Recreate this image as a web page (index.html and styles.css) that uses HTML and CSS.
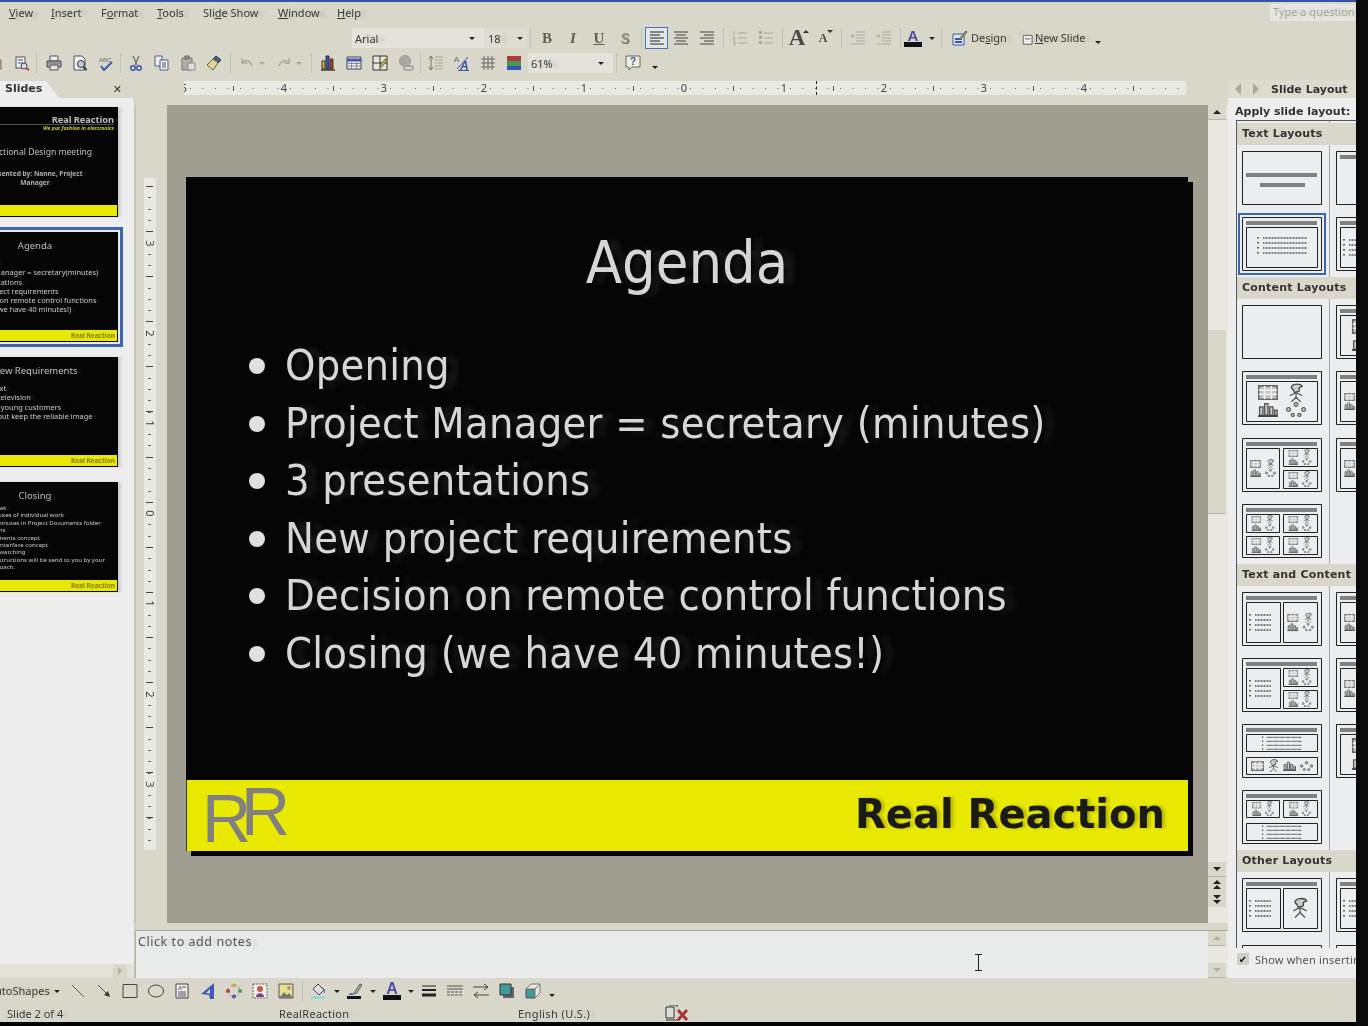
FILE: index.html
```html
<!DOCTYPE html>
<html lang="en">

<head>
    <meta charset="UTF-8">
    <meta name="viewport" content="width=device-width, initial-scale=1.0">
    <title>RealReaction - PowerPoint</title>
    <link rel="stylesheet" href="styles.css">
</head>

<body>
    <svg class="defs" width="0" height="0">
        <defs>
            <!-- toolbar icons -->
            <symbol id="i-open" viewBox="0 0 16 16"><path d="M1 3h5l1 2h6v9H1z" fill="#e3cf86" stroke="#666"/></symbol>
            <symbol id="i-search" viewBox="0 0 16 16"><rect x="2" y="2" width="9" height="11" fill="#efefef" stroke="#555"/><path d="M4 5h5M4 8h5" stroke="#39538f"/><circle cx="10" cy="11" r="3" fill="#cde" stroke="#444"/><path d="M12 13l3 2" stroke="#b33" stroke-width="2"/></symbol>
            <symbol id="i-print" viewBox="0 0 16 16"><path d="M4 1h8v5H4z" fill="#eee" stroke="#555"/><path d="M1 6h14v6H1z" fill="#aaa" stroke="#444"/><path d="M4 10h8v5H4z" fill="#ddd" stroke="#555"/><path d="M2 8h12" stroke="#777"/></symbol>
            <symbol id="i-preview" viewBox="0 0 16 16"><path d="M2 1h8l3 3v11H2z" fill="#eee" stroke="#555"/><circle cx="9" cy="9" r="3.500" fill="#bcd" stroke="#333"/><path d="M11.500 12l3 3" stroke="#333" stroke-width="2"/></symbol>
            <symbol id="i-spell" viewBox="0 0 16 16"><text x="1" y="6.500" font-size="6" font-family="Liberation Sans" fill="#666">ABC</text><path d="M3 11l3 4 8-8" fill="none" stroke="#3a55a8" stroke-width="2"/></symbol>
            <symbol id="i-cut" viewBox="0 0 16 16"><path d="M5 1l4 9M11 1L7 10" stroke="#777" stroke-width="1.400"/><circle cx="5" cy="13" r="2.300" fill="none" stroke="#3a55a8" stroke-width="1.400"/><circle cx="11" cy="13" r="2.300" fill="none" stroke="#3a55a8" stroke-width="1.400"/></symbol>
            <symbol id="i-copy" viewBox="0 0 16 16"><path d="M1 1h7v10H1z" fill="#eee" stroke="#4a5f95"/><path d="M6 5h8v10H6z" fill="#f2f2f2" stroke="#4a5f95"/><path d="M8 8h4M8 10h4M8 12h4" stroke="#555"/></symbol>
            <symbol id="i-paste" viewBox="0 0 16 16"><path d="M2 3h10v12H2z" fill="#b0ae9f" stroke="#777"/><path d="M5 1h4v3H5z" fill="#999" stroke="#666"/><path d="M8 8h7v7H8z" fill="#ddd" stroke="#888"/></symbol>
            <symbol id="i-brush" viewBox="0 0 16 16"><path d="M10 1l5 4-3 3-5-4z" fill="#4a5f95" stroke="#333"/><path d="M7 4l5 4-5 7-6-5z" fill="#e6d488" stroke="#666"/></symbol>
            <symbol id="i-undo" viewBox="0 0 16 16"><path d="M3 3v5h5M3 8c3-4 8-3 10 3" fill="none" stroke="#aaa9a0" stroke-width="1.500"/></symbol>
            <symbol id="i-redo" viewBox="0 0 16 16"><path d="M13 3v5H8M13 8c-3-4-8-3-10 3" fill="none" stroke="#aaa9a0" stroke-width="1.500"/></symbol>
            <symbol id="i-chart" viewBox="0 0 16 16"><path d="M2 6h3v8H2z" fill="#d8b83a" stroke="#333"/><path d="M6 1h3v13H6z" fill="#3a55a8" stroke="#333"/><path d="M10 4h3v10h-3z" fill="#b03a3a" stroke="#333"/><path d="M1 15h14" stroke="#333" stroke-width="1.400"/></symbol>
            <symbol id="i-table" viewBox="0 0 16 16"><path d="M1 2h14v12H1z" fill="#eee" stroke="#445"/><path d="M1 5h14" stroke="#3a55a8" stroke-width="3"/><path d="M1 8.500h14M1 11h14M5.500 5v9M10.500 5v9" stroke="#889"/></symbol>
            <symbol id="i-border" viewBox="0 0 16 16"><path d="M1 1h14v14H1zM8 1v14M1 8h14" fill="#e6e6de" stroke="#333"/><path d="M8 11l5-7 2 1-5 7z" fill="#d8b83a" stroke="#665"/></symbol>
            <symbol id="i-globe" viewBox="0 0 16 16"><circle cx="7" cy="6" r="5.500" fill="#aaa9a0" stroke="#999"/><path d="M6 11h7a2 2 0 010 4H8a2 2 0 010-4" fill="none" stroke="#999" stroke-width="1.400"/></symbol>
            <symbol id="i-spacing" viewBox="0 0 16 16"><path d="M7 2h8M7 5h8M7 8h8M7 11h8M7 14h8" stroke="#aaa9a0"/><path d="M3 2v12M1 4l2-3 2 3M1 12l2 3 2-3" fill="none" stroke="#777"/></symbol>
            <symbol id="i-grow" viewBox="0 0 16 16"><text x="0" y="7" font-size="8" font-family="Liberation Sans" fill="#666">A</text><path d="M3 14L14 2" stroke="#3a55a8"/><text x="6" y="15" font-size="12" font-weight="bold" font-style="italic" font-family="Liberation Sans" fill="#3a55a8">A</text><path d="M4 15.500h11" stroke="#3a55a8"/></symbol>
            <symbol id="i-grid" viewBox="0 0 16 16"><path d="M1 4h14M1 8h14M1 12h14M4 1v14M8 1v14M12 1v14" stroke="#666"/></symbol>
            <symbol id="i-color" viewBox="0 0 16 16"><path d="M1 1h14v5H1z" fill="#b03a3a"/><path d="M1 6h14v5H1z" fill="#3f9a55"/><path d="M1 11h14v4H1z" fill="#3a4fb0"/></symbol>
            <symbol id="i-help" viewBox="0 0 16 16"><path d="M1 1h14v11H7l-3 3v-3H1z" fill="#f0efdc" stroke="#666"/><text x="5" y="10" font-size="10" font-weight="bold" font-family="Liberation Sans" fill="#3a55a8">?</text></symbol>
            <symbol id="i-left" viewBox="0 0 16 16"><path d="M1 2h14M1 5h10M1 8h14M1 11h10M1 14h14" stroke="#222"/></symbol>
            <symbol id="i-center" viewBox="0 0 16 16"><path d="M1 2h14M3 5h10M1 8h14M3 11h10M1 14h14" stroke="#444"/></symbol>
            <symbol id="i-right" viewBox="0 0 16 16"><path d="M1 2h14M5 5h10M1 8h14M5 11h10M1 14h14" stroke="#444"/></symbol>
            <symbol id="i-number" viewBox="0 0 16 16"><path d="M6 3h9M6 8h9M6 13h9" stroke="#aaa9a0"/><path d="M2 1v4M1 7h2l-2 3h2M1 12h2v3H1" fill="none" stroke="#aaa9a0"/></symbol>
            <symbol id="i-bullet" viewBox="0 0 16 16"><path d="M6 3h9M6 8h9M6 13h9" stroke="#aaa9a0"/><path d="M1 1h3v3H1zM1 6h3v3H1zM1 11h3v3H1z" fill="#aaa9a0"/></symbol>
            <symbol id="i-outdent" viewBox="0 0 16 16"><path d="M6 2h9M6 5h9M6 8h9M6 11h9M1 14h14" stroke="#aaa9a0"/><path d="M5 6H1m2-2L1 6l2 2" fill="none" stroke="#9aa"/></symbol>
            <symbol id="i-indent" viewBox="0 0 16 16"><path d="M6 2h9M6 5h9M6 8h9M6 11h9M1 14h14" stroke="#aaa9a0"/><path d="M0 6h4M2 4l2 2-2 2" fill="none" stroke="#9aa"/></symbol>
            <symbol id="i-design" viewBox="0 0 16 16"><path d="M1 4h11v11H1z" fill="#dde6f5" stroke="#3a55a8"/><path d="M3 9h7M3 12h7" stroke="#3a55a8" stroke-width="2"/><path d="M7 9l7-8 1 1-7 8z" fill="#d8b83a" stroke="#555"/></symbol>
            <symbol id="i-new" viewBox="0 0 18 16"><path d="M7 5h10v10H7z" fill="#efefe8" stroke="#555"/><path d="M9 9h6" stroke="#555"/><path d="M3 1l1 3M0 5h3M7 0L5 3M1 1l2 3" stroke="#c9c9c0"/></symbol>
            <symbol id="i-line" viewBox="0 0 16 16"><path d="M2 2l12 12" stroke="#555"/></symbol>
            <symbol id="i-arrow" viewBox="0 0 16 16"><path d="M2 2l10 10" stroke="#555"/><path d="M14 14l-6-2 4-4z" fill="#333"/></symbol>
            <symbol id="i-rect" viewBox="0 0 16 16"><path d="M1 1.500h14v13H1z" fill="none" stroke="#444"/></symbol>
            <symbol id="i-oval" viewBox="0 0 16 16"><ellipse cx="8" cy="8" rx="7.500" ry="6" fill="none" stroke="#444"/></symbol>
            <symbol id="i-textbox" viewBox="0 0 16 16"><path d="M2 1h12v14H2z" fill="#eee" stroke="#444"/><text x="4" y="7" font-size="6" font-family="Liberation Sans" fill="#333">A</text><path d="M8 4h4M4 9h8M4 11h8M4 13h8" stroke="#555"/></symbol>
            <symbol id="i-wordart" viewBox="0 0 16 16"><path d="M14 0L1 11l8 1 1 4h4zM10 6l-4 4 4 .5z" fill="#3f5bb5" fill-rule="evenodd"/></symbol>
            <symbol id="i-diagram" viewBox="0 0 16 16"><circle cx="8" cy="2.500" r="2" fill="#d8b83a"/><circle cx="14" cy="8" r="2" fill="#3f9a55"/><circle cx="8" cy="13.500" r="2" fill="#3a4fb0"/><circle cx="2" cy="8" r="2" fill="#b03a3a"/><circle cx="8" cy="8" r="6" fill="none" stroke="#888" stroke-dasharray="2 2"/></symbol>
            <symbol id="i-clip" viewBox="0 0 16 16"><path d="M1 1h14v14H1z" fill="#eee" stroke="#666" stroke-dasharray="2 1"/><circle cx="8" cy="6" r="3" fill="#c45a4a"/><path d="M4 14c0-5 8-5 8 0z" fill="#7a3f7a"/></symbol>
            <symbol id="i-pic" viewBox="0 0 16 16"><path d="M1 1h14v14H1z" fill="#e8e08a" stroke="#555"/><path d="M1 15l5-6 3 3 2-2 4 5z" fill="#777"/><circle cx="11" cy="5" r="2" fill="#999"/></symbol>
            <symbol id="i-fill" viewBox="0 0 16 16"><path d="M7 1l6 6-5 5-6-6z" fill="#ddd" stroke="#445"/><path d="M11 5c3 1 3 4 2 5" fill="none" stroke="#3a55a8"/><path d="M0 13h14v3H0z" fill="#9fd3d3"/></symbol>
            <symbol id="i-pen" viewBox="0 0 16 16"><path d="M7 10l6-9 2 1-6 9z" fill="#d8b83a" stroke="#3a55a8"/><path d="M3 10c2 1 4 0 4 0l-1 2H2z" fill="#3a55a8"/><path d="M0 13h14v3H0z" fill="#111"/></symbol>
            <symbol id="i-lines" viewBox="0 0 16 16"><path d="M1 3h14" stroke="#222"/><path d="M1 7h14" stroke="#222" stroke-width="2"/><path d="M1 12h14" stroke="#222" stroke-width="3"/></symbol>
            <symbol id="i-dash" viewBox="0 0 16 16"><path d="M0 3h16M0 6h16" stroke="#555"/><path d="M0 9h16M0 12h16" stroke="#555" stroke-dasharray="3 1"/></symbol>
            <symbol id="i-arrows" viewBox="0 0 16 16"><path d="M0 4h15M11 1l4 3-4 3" fill="none" stroke="#444"/><path d="M1 12h15M5 9l-4 3 4 3" fill="none" stroke="#444"/></symbol>
            <symbol id="i-shadow" viewBox="0 0 16 16"><path d="M4 4h11v11H4z" fill="#666"/><path d="M1 1h11v11H1z" fill="#3f9a9a" stroke="#333"/></symbol>
            <symbol id="i-3d" viewBox="0 0 16 16"><path d="M1 6h9v9H1z" fill="#3f9a9a" stroke="#555"/><path d="M1 6l5-5h9l-5 5zM10 6l5-5v9l-5 5z" fill="#e6e6de" stroke="#777"/></symbol>
            <symbol id="i-book" viewBox="0 0 24 16"><path d="M1 2h8v11H1zM4 0h8v2M1 15h12" fill="#ddd" stroke="#333"/><path d="M13 5l9 10M22 5l-9 10" stroke="#a33" stroke-width="3"/></symbol>

            <!-- pieces of the layout thumbnails -->
            <symbol id="p-table" viewBox="0 0 12 9"><path d="M.500.500h11v8H.500z" fill="#c4c4c4" stroke="#666"/><path d="M.500 3h11M.500 5.500h11M4 .500v8M8 .500v8" stroke="#eee"/></symbol>
            <symbol id="p-person" viewBox="0 0 12 12"><path d="M3 3c0-3 6-3 7-1L8 3v2l-3 1-1-2z" fill="#ccc" stroke="#444" stroke-width=".8"/><path d="M6 6v3M2 8l4-2 4 2M6 9l-3 3M6 9l3 3" fill="none" stroke="#555" stroke-width=".8"/></symbol>
            <symbol id="p-chart" viewBox="0 0 12 9"><path d="M1 3h2v5H1zM4 1h2v7H4zM7 3h2v5H7zM10 5h1.500v3H10z" fill="#ccc" stroke="#555" stroke-width=".8"/><path d="M0 8.500h12" stroke="#444"/></symbol>
            <symbol id="p-cycle" viewBox="0 0 12 9"><circle cx="6" cy="1.500" r="1.200" fill="#bbb" stroke="#444" stroke-width=".6"/><circle cx="10.500" cy="4.500" r="1.200" fill="#bbb" stroke="#444" stroke-width=".6"/><circle cx="8" cy="7.800" r="1" fill="#bbb" stroke="#444" stroke-width=".6"/><circle cx="4" cy="7.800" r="1" fill="#bbb" stroke="#444" stroke-width=".6"/><circle cx="1.500" cy="4.500" r="1.200" fill="#bbb" stroke="#444" stroke-width=".6"/></symbol>
            <symbol id="p-tile" viewBox="0 0 32 19">
                <use href="#p-table" x="3" y="1" width="11" height="8"/>
                <use href="#p-person" x="18" y="0" width="11" height="10"/>
                <use href="#p-chart" x="3" y="10" width="11" height="8"/>
                <use href="#p-cycle" x="18" y="10" width="11" height="8"/>
            </symbol>
            <symbol id="p-lines" viewBox="0 0 56 20"><path d="M5 2v1.500M5 7v1.500M5 12v1.500M5 17v1.500" stroke="#333" stroke-width="1.500"/><path d="M10 3h44M10 8h44M10 13h44M10 18h44" stroke="#555" stroke-width="1.500" stroke-dasharray="1 .5"/></symbol>
            <symbol id="p-short" viewBox="0 0 30 20"><path d="M3 2v1.500M3 7v1.500M3 12v1.500M3 17v1.500" stroke="#333" stroke-width="1.500"/><path d="M8 3h16M8 8h16M8 13h16M8 18h16" stroke="#555" stroke-width="1.500" stroke-dasharray="1 .5"/></symbol>
            <symbol id="p-base" viewBox="0 0 80 54"><path d="M.500.500h79v53H.500z" fill="#ecedee" stroke="#222"/><path d="M4 4h71v4H4z" fill="#808080"/></symbol>
            <symbol id="p-bare" viewBox="0 0 80 54"><path d="M.500.500h79v53H.500z" fill="#ecedee" stroke="#222"/></symbol>

            <!-- slide layouts -->
            <symbol id="l-title" viewBox="0 0 80 54"><use href="#p-bare"/><path d="M4 22h71v4H4z" fill="#808080"/><path d="M18 32h45v4H18z" fill="#808080"/></symbol>
            <symbol id="l-only" viewBox="0 0 80 54"><use href="#p-base"/></symbol>
            <symbol id="l-text" viewBox="0 0 80 54"><use href="#p-base"/><path d="M4.500 10.500h71v40h-71z" fill="none" stroke="#222"/><use href="#p-lines" x="11" y="18" width="56" height="20"/></symbol>
            <symbol id="l-2text" viewBox="0 0 80 54"><use href="#p-base"/><path d="M4.500 10.500h33v40h-33zM41.500 10.500h34v40h-34z" fill="none" stroke="#222"/><use href="#p-short" x="5" y="20" width="30" height="20"/></symbol>
            <symbol id="l-blank" viewBox="0 0 80 54"><use href="#p-bare"/></symbol>
            <symbol id="l-one" viewBox="0 0 80 54"><use href="#p-base"/><path d="M4.500 10.500h71v40h-71z" fill="none" stroke="#222"/><use href="#p-tile" x="10" y="12" width="60" height="36"/></symbol>
            <symbol id="l-mix" viewBox="0 0 80 54"><use href="#p-base"/><path d="M4.500 10.500h33v40h-33zM41.500 10.500h34v18h-34zM41.500 32.500h34v18h-34z" fill="none" stroke="#222"/><use href="#p-tile" x="5" y="14" width="32" height="33"/><use href="#p-tile" x="42" y="11" width="32" height="17"/><use href="#p-tile" x="42" y="33" width="32" height="17"/></symbol>
            <symbol id="l-four" viewBox="0 0 80 54"><use href="#p-base"/><path d="M4.500 10.500h33v18h-33zM41.500 10.500h34v18h-34zM4.500 32.500h33v18h-33zM41.500 32.500h34v18h-34z" fill="none" stroke="#222"/><use href="#p-tile" x="5" y="11" width="32" height="17"/><use href="#p-tile" x="42" y="11" width="32" height="17"/><use href="#p-tile" x="5" y="33" width="32" height="17"/><use href="#p-tile" x="42" y="33" width="32" height="17"/></symbol>
            <symbol id="l-tc" viewBox="0 0 80 54"><use href="#p-base"/><path d="M4.500 10.500h34v40h-34zM41.500 10.500h34v40h-34z" fill="none" stroke="#222"/><use href="#p-short" x="5" y="20" width="30" height="20"/><use href="#p-tile" x="42" y="12" width="33" height="37"/></symbol>
            <symbol id="l-tcc" viewBox="0 0 80 54"><use href="#p-base"/><path d="M4.500 10.500h34v40h-34zM41.500 10.500h34v18h-34zM41.500 32.500h34v18h-34z" fill="none" stroke="#222"/><use href="#p-short" x="5" y="20" width="30" height="20"/><use href="#p-tile" x="42" y="11" width="32" height="17"/><use href="#p-tile" x="42" y="33" width="32" height="17"/></symbol>
            <symbol id="l-over" viewBox="0 0 80 54"><use href="#p-base"/><path d="M4.500 10.500h71v17h-71zM4.500 33.500h71v17h-71z" fill="none" stroke="#222"/><use href="#p-lines" x="11" y="11" width="56" height="16"/><use href="#p-table" x="9" y="37" width="13" height="10"/><use href="#p-person" x="25" y="35" width="13" height="13"/><use href="#p-chart" x="41" y="37" width="13" height="10"/><use href="#p-cycle" x="58" y="37" width="13" height="10"/></symbol>
            <symbol id="l-under" viewBox="0 0 80 54"><use href="#p-base"/><path d="M4.500 10.500h33v17h-33zM41.500 10.500h34v17h-34zM4.500 33.500h71v17h-71z" fill="none" stroke="#222"/><use href="#p-tile" x="5" y="11" width="32" height="16"/><use href="#p-tile" x="42" y="11" width="32" height="16"/><use href="#p-lines" x="11" y="34" width="56" height="16"/></symbol>
            <symbol id="l-person" viewBox="0 0 80 54"><use href="#p-base"/><path d="M4.500 10.500h34v40h-34zM41.500 10.500h34v40h-34z" fill="#ecedee" stroke="#222"/><use href="#p-short" x="5" y="20" width="30" height="20"/><use href="#p-person" x="48" y="19" width="20" height="21"/></symbol>
        </defs>
    </svg>

    <div class="app">
        <div class="title-line"></div>

        <div class="menu">
            <span class="menu-item m-view"><u>V</u>iew</span>
            <span class="menu-item m-insert"><u>I</u>nsert</span>
            <span class="menu-item m-format">F<u>o</u>rmat</span>
            <span class="menu-item m-tools"><u>T</u>ools</span>
            <span class="menu-item m-show">Sli<u>d</u>e Show</span>
            <span class="menu-item m-window"><u>W</u>indow</span>
            <span class="menu-item"><u>H</u>elp</span>
            <span class="question">Type a question</span>
        </div>

        <div class="toolbar format-bar">
            <span class="combo font-combo">Arial<i class="caret"></i></span>
            <span class="combo size-combo">18<i class="caret"></i></span>
            <span class="sep"></span>
            <span class="b letter"><b>B</b></span>
            <span class="b letter"><em>I</em></span>
            <span class="b letter"><u>U</u></span>
            <span class="b letter shadowed">S</span>
            <span class="sep"></span>
            <span class="b active"><svg><use href="#i-left"/></svg></span>
            <span class="b"><svg><use href="#i-center"/></svg></span>
            <span class="b"><svg><use href="#i-right"/></svg></span>
            <span class="sep"></span>
            <span class="b"><svg><use href="#i-number"/></svg></span>
            <span class="b"><svg><use href="#i-bullet"/></svg></span>
            <span class="sep"></span>
            <span class="b grow-a">A<i class="up"></i></span>
            <span class="b shrink-a">A<i class="up"></i></span>
            <span class="sep"></span>
            <span class="b"><svg><use href="#i-outdent"/></svg></span>
            <span class="b"><svg><use href="#i-indent"/></svg></span>
            <span class="sep"></span>
            <span class="b color-a format-color">A<i class="swatch"></i></span>
            <i class="caret solo"></i>
            <span class="sep design-sep"></span>
            <span class="b small"><svg><use href="#i-design"/></svg></span>
            <span class="tool-label design-label">De<u>s</u>ign</span>
            <span class="b small new-icon"><svg><use href="#i-new"/></svg></span>
            <span class="tool-label"><u>N</u>ew Slide</span>
            <i class="caret chevron format-chevron"></i>
        </div>

        <div class="toolbar standard-bar">
            <span class="b"><svg><use href="#i-open"/></svg></span>
            <span class="b"><svg><use href="#i-search"/></svg></span>
            <span class="sep wide"></span>
            <span class="b"><svg><use href="#i-print"/></svg></span>
            <span class="b"><svg><use href="#i-preview"/></svg></span>
            <span class="b"><svg><use href="#i-spell"/></svg></span>
            <span class="sep tight"></span>
            <span class="b"><svg><use href="#i-cut"/></svg></span>
            <span class="b"><svg><use href="#i-copy"/></svg></span>
            <span class="b"><svg><use href="#i-paste"/></svg></span>
            <span class="b"><svg><use href="#i-brush"/></svg></span>
            <span class="sep"></span>
            <span class="b"><svg><use href="#i-undo"/></svg></span>
            <i class="caret faded"></i>
            <span class="b"><svg><use href="#i-redo"/></svg></span>
            <i class="caret faded"></i>
            <span class="sep"></span>
            <span class="b"><svg><use href="#i-chart"/></svg></span>
            <span class="b"><svg><use href="#i-table"/></svg></span>
            <span class="b"><svg><use href="#i-border"/></svg></span>
            <span class="b"><svg><use href="#i-globe"/></svg></span>
            <span class="sep tight"></span>
            <span class="b"><svg><use href="#i-spacing"/></svg></span>
            <span class="b"><svg><use href="#i-grow"/></svg></span>
            <span class="b"><svg><use href="#i-grid"/></svg></span>
            <span class="b"><svg><use href="#i-color"/></svg></span>
            <span class="combo zoom-combo">61%<i class="caret"></i></span>
            <span class="sep"></span>
            <span class="b"><svg><use href="#i-help"/></svg></span>
            <i class="caret chevron"></i>
        </div>

        <div class="main">
            <aside class="slides-pane">
                <div class="pane-tabs">
                    <span class="tab">Slides</span>
                    <span class="close">✕</span>
                </div>
                <div class="thumbs">
                    <div class="thumb">
                        <div class="thumb-brand">Real Reaction</div>
                        <div class="thumb-tag">We put fashion in electronics</div>
                        <div class="thumb-cover">Functional Design meeting</div>
                        <div class="thumb-by">Presented by: Nanne, Project<br>Manager</div>
                        <div class="thumb-band"></div>
                    </div>
                    <div class="thumb selected">
                        <div class="thumb-title">Agenda</div>
                        <ul class="thumb-list">
                            <li>Opening</li>
                            <li>Project Manager = secretary(minutes)</li>
                            <li>3 presentations</li>
                            <li>New project requirements</li>
                            <li>Decision on remote control functions</li>
                            <li>Closing (we have 40 minutes!)</li>
                        </ul>
                        <div class="thumb-band">Real Reaction</div>
                    </div>
                    <div class="thumb">
                        <div class="thumb-title">New Requirements</div>
                        <ul class="thumb-list">
                            <li>No teletext</li>
                            <li>Only for television</li>
                            <li>Focus on young customers</li>
                            <li>Modern but keep the reliable image</li>
                        </ul>
                        <div class="thumb-band">Real Reaction</div>
                    </div>
                    <div class="thumb">
                        <div class="thumb-title">Closing</div>
                        <ul class="thumb-list dense">
                            <li>Coffee break</li>
                            <li>Thirty minutes of individual work</li>
                            <li>Put your minutes in Project Documents folder</li>
                            <li>Next actions</li>
                            <li>ID: components concept</li>
                            <li>UID: user interface concept</li>
                            <li>ME: trend watching</li>
                            <li>Specific instructions will be send to you by your</li>
                            <li>personal coach.</li>
                        </ul>
                        <div class="thumb-band">Real Reaction</div>
                    </div>
                </div>
                <div class="hscroll"><span class="arrow-right"></span></div>
            </aside>

            <section class="center">
                <div class="h-ruler-row">
                    <div class="h-ruler">
                        <div class="h-cell">5</div>
                        <div class="h-cell">4</div>
                        <div class="h-cell">3</div>
                        <div class="h-cell">2</div>
                        <div class="h-cell">1</div>
                        <div class="h-cell">0</div>
                        <div class="h-cell">1</div>
                        <div class="h-cell">2</div>
                        <div class="h-cell">3</div>
                        <div class="h-cell">4</div>
                        <div class="h-cell blank"></div>
                        <span class="h-marker"></span>
                    </div>
                </div>

                <div class="work">
                    <div class="v-ruler-col">
                        <div class="v-ruler">
                            <div class="v-cell"><span>3</span></div>
                            <div class="v-cell"><span>2</span></div>
                            <div class="v-cell"><span>1</span></div>
                            <div class="v-cell"><span>0</span></div>
                            <div class="v-cell"><span>1</span></div>
                            <div class="v-cell"><span>2</span></div>
                            <div class="v-cell"><span>3</span></div>
                        </div>
                    </div>
                    <div class="canvas">
                        <div class="slide">
                            <h1 class="slide-title">Agenda</h1>
                            <ul class="slide-list">
                                <li>Opening</li>
                                <li>Project Manager = secretary (minutes)</li>
                                <li>3 presentations</li>
                                <li>New project requirements</li>
                                <li>Decision on remote control functions</li>
                                <li>Closing (we have 40 minutes!)</li>
                            </ul>
                            <div class="slide-band">
                                <div class="logo"><span class="logo-a">R</span><span class="logo-b">R</span></div>
                                <div class="brand">Real Reaction</div>
                            </div>
                        </div>
                    </div>
                    <div class="vscroll">
                        <span class="sb-btn"><i class="tri-up"></i></span>
                        <div class="sb-track"><div class="sb-thumb"></div></div>
                        <span class="sb-btn"><i class="tri-down"></i></span>
                        <span class="sb-page"><i class="tri-up"></i><i class="tri-up"></i></span>
                        <span class="sb-page"><i class="tri-down"></i><i class="tri-down"></i></span>
                    </div>
                </div>

                <div class="notes">
                    <div class="notes-text">Click to add notes</div>
                    <div class="notes-scroll">
                        <span class="sb-btn dim"><i class="tri-up"></i></span>
                        <span class="sb-btn dim"><i class="tri-down"></i></span>
                    </div>
                    <span class="ibeam"></span>
                </div>
            </section>

            <aside class="layout-pane">
                <div class="task-head">
                    <span class="nav-arrow left"></span>
                    <span class="nav-arrow right"></span>
                    <b>Slide Layout</b>
                </div>
                <div class="apply">Apply slide layout:</div>
                <div class="layouts">
                    <div class="lay-head">Text Layouts</div>
                    <div class="lay-grid">
                        <svg class="lay"><use href="#l-title"/></svg>
                        <svg class="lay"><use href="#l-only"/></svg>
                        <svg class="lay selected"><use href="#l-text"/></svg>
                        <svg class="lay"><use href="#l-2text"/></svg>
                    </div>
                    <div class="lay-head">Content Layouts</div>
                    <div class="lay-grid">
                        <svg class="lay"><use href="#l-blank"/></svg>
                        <svg class="lay"><use href="#l-one"/></svg>
                        <svg class="lay"><use href="#l-one"/></svg>
                        <svg class="lay"><use href="#l-mix"/></svg>
                        <svg class="lay"><use href="#l-mix"/></svg>
                        <svg class="lay"><use href="#l-mix"/></svg>
                        <svg class="lay"><use href="#l-four"/></svg>
                    </div>
                    <div class="lay-head">Text and Content Layouts</div>
                    <div class="lay-grid">
                        <svg class="lay"><use href="#l-tc"/></svg>
                        <svg class="lay"><use href="#l-mix"/></svg>
                        <svg class="lay"><use href="#l-tcc"/></svg>
                        <svg class="lay"><use href="#l-mix"/></svg>
                        <svg class="lay"><use href="#l-over"/></svg>
                        <svg class="lay"><use href="#l-one"/></svg>
                        <svg class="lay"><use href="#l-under"/></svg>
                    </div>
                    <div class="lay-head">Other Layouts</div>
                    <div class="lay-grid">
                        <svg class="lay"><use href="#l-person"/></svg>
                        <svg class="lay"><use href="#l-person"/></svg>
                        <svg class="lay"><use href="#l-blank"/></svg>
                        <svg class="lay"><use href="#l-blank"/></svg>
                    </div>
                </div>
                <div class="show-row">
                    <span class="check">✔</span>
                    <span>Show when inserting slides</span>
                </div>
            </aside>
        </div>

        <div class="toolbar draw-bar">
            <span class="tool-label shapes"><u>A</u>utoShapes</span>
            <i class="caret solo"></i>
            <span class="b"><svg><use href="#i-line"/></svg></span>
            <span class="b"><svg><use href="#i-arrow"/></svg></span>
            <span class="b"><svg><use href="#i-rect"/></svg></span>
            <span class="b"><svg><use href="#i-oval"/></svg></span>
            <span class="b"><svg><use href="#i-textbox"/></svg></span>
            <span class="b"><svg><use href="#i-wordart"/></svg></span>
            <span class="b"><svg><use href="#i-diagram"/></svg></span>
            <span class="b"><svg><use href="#i-clip"/></svg></span>
            <span class="b"><svg><use href="#i-pic"/></svg></span>
            <span class="sep"></span>
            <span class="b"><svg><use href="#i-fill"/></svg></span>
            <i class="caret solo"></i>
            <span class="b"><svg><use href="#i-pen"/></svg></span>
            <i class="caret solo"></i>
            <span class="b color-a">A<i class="swatch"></i></span>
            <i class="caret solo"></i>
            <span class="b"><svg><use href="#i-lines"/></svg></span>
            <span class="b"><svg><use href="#i-dash"/></svg></span>
            <span class="b"><svg><use href="#i-arrows"/></svg></span>
            <span class="b"><svg><use href="#i-shadow"/></svg></span>
            <span class="b"><svg><use href="#i-3d"/></svg></span>
            <i class="caret chevron"></i>
        </div>

        <div class="status">
            <span class="st-slide">Slide 2 of 4</span>
            <span class="st-name">RealReaction</span>
            <span class="st-lang">English (U.S.)</span>
            <svg class="st-icon"><use href="#i-book"/></svg>
        </div>

        <div class="black-bottom"></div>
        <div class="black-right"></div>
    </div>
</body>

</html>
```
FILE: styles.css
```css
* {
    box-sizing: border-box;
}

html,
body {
    margin: 0;
    padding: 0;
    background-color: #000;
}

.defs {
    position: absolute;
}

.app {
    position: relative;
    width: 1368px;
    height: 1026px;
    overflow: hidden;
    display: flex;
    flex-direction: column;
    background-color: #d8d7c9;
    color: #3a3a36;
    font-family: "Noto Sans", "DejaVu Sans", sans-serif;
    font-size: 11px;
    filter: blur(0.5px);
}

.title-line {
    height: 2px;
    background-color: #2f55a4;
}

/* menu */
.menu {
    height: 24px;
    display: flex;
    align-items: center;
    padding: 0 0 4px 9px;
    text-shadow: 6px 0 3px rgba(90, 90, 80, 0.18);
}

.menu-item {
    display: block;
}

.m-view {
    width: 42px;
}

.m-insert {
    width: 50px;
}

.m-format {
    width: 56px;
}

.m-tools {
    width: 46px;
}

.m-show {
    width: 75px;
}

.m-window {
    width: 59px;
}

.question {
    margin-left: auto;
    margin-right: 13px;
    width: 85px;
    height: 17px;
    padding-left: 3px;
    line-height: 16px;
    white-space: nowrap;
    overflow: hidden;
    background-color: #e6e6e0;
    color: #a6a69e;
}

/* toolbars */
.toolbar {
    display: flex;
    align-items: center;
    flex: none;
}

.format-bar {
    height: 24px;
    padding-left: 352px;
}

.format-bar .tool-label {
    margin-top: -2px;
}

.standard-bar {
    height: 26px;
    margin-left: -17px;
}

.b {
    width: 26px;
    height: 22px;
    flex: none;
    display: flex;
    align-items: center;
    justify-content: center;
    position: relative;
}

.b svg {
    width: 16px;
    height: 16px;
}

.b.small {
    width: 16px;
}

.b.active {
    width: 23px;
    background-color: #e3e6e6;
    border: 1px solid #4a76b8;
}

.sep {
    width: 1px;
    height: 20px;
    margin: 0 3px;
    flex: none;
    background-color: #c3c2b4;
}

.sep.wide {
    margin: 0 4px 0 1px;
}

.sep.tight {
    margin: 0 2px 0 1px;
}

.design-sep {
    margin-right: 10px;
}

.caret {
    display: inline-block;
    width: 0;
    height: 0;
    border-left: 3px solid transparent;
    border-right: 3px solid transparent;
    border-top: 3px solid #222;
}

.caret.faded {
    margin: 0 6px 0 -1px;
    border-top-color: #aaa9a0;
}

.caret.solo {
    margin: 0 3px;
    flex: none;
}

.caret.chevron {
    margin: 8px 0 0 6px;
    flex: none;
}

.caret.format-chevron {
    margin-left: 10px;
}

.combo {
    height: 20px;
    flex: none;
    display: flex;
    align-items: center;
    justify-content: space-between;
    padding: 0 9px 0 3px;
    background-color: #e3e3dc;
    text-shadow: 6px 0 3px rgba(90, 90, 80, 0.18);
}

.font-combo {
    width: 132px;
}

.size-combo {
    width: 43px;
    background-color: #dcdcd2;
    padding-left: 4px;
    padding-right: 4px;
}

.zoom-combo {
    width: 85px;
    margin-left: 1px;
    padding-left: 3px;
}

.letter {
    font-family: "Liberation Serif", serif;
    font-size: 15px;
    font-weight: bold;
    color: #5f5e57;
}

.letter em {
    font-style: italic;
}

.shadowed {
    color: #99988e;
    text-shadow: 1px 1px 0 #66655e;
}

.grow-a,
.shrink-a {
    font-family: "Liberation Serif", serif;
    font-weight: bold;
    color: #4a4a46;
}

.grow-a {
    font-size: 23px;
    margin-left: -2px;
}

.shrink-a {
    font-size: 12px;
    margin-right: 2px;
}

.up {
    position: absolute;
    top: 3px;
    right: 1px;
    width: 0;
    height: 0;
    border-left: 3px solid transparent;
    border-right: 3px solid transparent;
    border-bottom: 3px solid #333;
}

.shrink-a .up {
    transform: rotate(180deg);
    right: 3px;
}

.color-a {
    flex-direction: column;
    font-family: "Liberation Sans", sans-serif;
    font-size: 15px;
    line-height: 13px;
    font-weight: bold;
    color: #4a4fa8;
}

.format-color {
    margin-left: -4px;
}

.swatch {
    display: block;
    width: 18px;
    height: 5px;
    background-color: #111;
}

.tool-label {
    white-space: nowrap;
    text-shadow: 5px 0 3px rgba(90, 90, 80, 0.15);
}

.design-label {
    margin: 0 8px 0 3px;
}

.b.new-icon {
    width: 20px;
}

.draw-bar {
    height: 26px;
    margin-left: -12px;
}

.shapes {
    width: 64px;
    margin-top: -2px;
}

.draw-bar .b {
    height: 24px;
}

.draw-bar .color-a {
    width: 28px;
    font-size: 16px;
}

.draw-bar .caret.solo {
    margin: 0 2px;
}

.draw-bar .shapes + .caret.solo {
    margin-right: 5px;
}

.draw-bar .caret.chevron {
    margin-left: 3px;
}

/* main area */
.main {
    height: 898px;
    flex: none;
    margin-top: 4px;
    display: flex;
}

.slides-pane {
    width: 135px;
    flex: none;
    display: flex;
    flex-direction: column;
}

.pane-tabs {
    height: 18px;
    display: flex;
    align-items: flex-end;
    justify-content: space-between;
    flex: none;
}

.tab {
    width: 59px;
    height: 17px;
    padding-left: 5px;
    font-family: "DejaVu Sans", sans-serif;
    font-weight: bold;
    line-height: 16px;
    color: #333;
    clip-path: polygon(0 0, 46px 0, 100% 100%, 0 100%);
    background-color: #ecedec;
}

.close {
    margin: 0 13px 2px 0;
    font-size: 11px;
    font-weight: bold;
    color: #333;
}

.thumbs {
    flex: 1;
    overflow: hidden;
    padding-top: 9px;
    background-color: #ecedec;
    border-right: 1px solid #c6c6b8;
}

.thumb {
    position: relative;
    width: 166px;
    height: 110px;
    margin: 0 0 15px -48px;
    display: flex;
    flex-direction: column;
    background-color: #050505;
    color: #c4c4c4;
    font-size: 7px;
    line-height: 9.3px;
    box-shadow: 3px 0 2px #d0cfd4;
    white-space: nowrap;
    text-shadow: 4px 0 2px rgba(200, 200, 200, 0.15);
}

.thumb.selected {
    box-shadow: 0 0 0 2px #e8e8f0, 0 0 0 5px #3a66ad;
}

.thumb-brand {
    margin: 8px 4px 0 0;
    text-align: right;
    font-size: 9.2px;
    font-weight: bold;
    line-height: 9px;
    color: #bbb;
}

.thumb-tag {
    margin-right: 4px;
    text-align: right;
    font-size: 5.2px;
    line-height: 6px;
    font-style: italic;
    font-weight: bold;
    color: #c4c430;
    border-top: 1px solid #555;
}

.thumb-cover {
    margin-top: 17px;
    text-align: center;
    font-size: 8.6px;
    color: #bbb;
    padding-left: 6px;
}

.thumb-by {
    margin-top: 12px;
    text-align: center;
    font-size: 6.6px;
    line-height: 9px;
    font-weight: bold;
    color: #aaa;
}

.thumb-title {
    margin-top: 8px;
    text-align: center;
    font-size: 9.5px;
    line-height: 12px;
    color: #bbb;
}

.thumb-list {
    list-style: none;
    margin: 7px 0 0;
    padding: 0 0 0 16px;
    font-size: 7.4px;
}

.thumb-list.dense {
    margin-top: 2px;
    padding-left: 18px;
    font-size: 6.1px;
    line-height: 7.4px;
}

.thumb-band {
    margin: auto 1px 1px 0;
    height: 11px;
    padding-right: 2px;
    text-align: right;
    background-color: #e8e800;
    color: #7f7f20;
    font-size: 6.5px;
    line-height: 11px;
    font-weight: bold;
}

.hscroll {
    height: 14px;
    flex: none;
    display: flex;
    justify-content: flex-end;
    background-color: #e3e2d8;
    border-right: 1px solid #c6c6b8;
}

.arrow-right {
    width: 14px;
    margin-right: 7px;
    background-color: #d8d7c9;
    position: relative;
}

.arrow-right::after {
    content: "";
    position: absolute;
    left: 5px;
    top: 3px;
    border-top: 4px solid transparent;
    border-bottom: 4px solid transparent;
    border-left: 4px solid #b0afa4;
}

.center {
    width: 1093px;
    flex: none;
    display: flex;
    flex-direction: column;
}

.h-ruler-row {
    height: 25px;
    flex: none;
    padding: 1px 0 0 49px;
}

.h-ruler {
    position: relative;
    width: 1002px;
    height: 14px;
    display: flex;
    overflow: hidden;
    background-color: #e9e9e4;
    color: #444;
    font-size: 11px;
    line-height: 14px;
}

.h-cell {
    width: 100px;
    flex: none;
    text-align: center;
    background-image:
        linear-gradient(#555, #555),
        linear-gradient(90deg, #666 1px, transparent 1px);
    background-repeat: no-repeat, repeat-x;
    background-size: 1px 5px, 12.5px 1px;
    background-position: 100% 5px, 6px 7px;
}

.h-cell:first-child {
    margin-left: -50px;
}

.h-marker {
    position: absolute;
    left: 632px;
    top: 0;
    height: 14px;
    border-left: 1px dashed #222;
}

.work {
    height: 818px;
    flex: none;
    display: flex;
}

.v-ruler-col {
    width: 32px;
    flex: none;
    padding: 73px 0 0 8px;
    border-left: 1px solid #c6c6b8;
}

.v-ruler {
    width: 12px;
    height: 672px;
    padding-top: 20px;
    overflow: hidden;
    background-color: #e9e9e4;
    background-image:
        repeating-linear-gradient(#444 0, #444 1px, transparent 1px, transparent 45.1px),
        repeating-linear-gradient(#666 0, #666 1px, transparent 1px, transparent 11.28px);
    background-repeat: no-repeat;
    background-size: 7px 100%, 3px 100%;
    background-position: 2px 8px, 4px 8px;
}

.v-cell {
    height: 90.2px;
    display: flex;
    align-items: center;
    justify-content: center;
    font-size: 11px;
    color: #444;
}

.v-cell span {
    transform: rotate(90deg);
    background-color: #e9e9e4;
    padding: 0 1px;
}

.canvas {
    width: 1041px;
    flex: none;
    padding: 72px 0 0 19px;
    background-color: #a09e90;
}

.slide {
    width: 1002px;
    height: 674px;
    display: flex;
    flex-direction: column;
    background-color: #050505;
    box-shadow: 5px 5px 0 #050505;
    color: #d6d6d6;
    font-family: "DejaVu Sans", "Noto Sans", sans-serif;
    font-stretch: condensed;
}

.slide-title {
    margin: 51px 0 0;
    height: 109px;
    font-size: 59px;
    font-weight: normal;
    line-height: 70px;
    text-align: center;
    text-shadow: 10px 0 6px rgba(200, 200, 200, 0.12);
}

.slide-list {
    list-style: none;
    margin: 0;
    padding: 0 0 0 99px;
    font-size: 43px;
    letter-spacing: 0.24px;
    line-height: 57.6px;
    white-space: nowrap;
    text-shadow: 10px 0 6px rgba(200, 200, 200, 0.14);
}

.slide-list li {
    position: relative;
}

.slide-list li::before {
    content: "";
    position: absolute;
    left: -36px;
    top: 21px;
    width: 16px;
    height: 16px;
    border-radius: 50%;
    background-color: #e0e0e0;
}

.slide-band {
    height: 71px;
    margin-top: auto;
    display: flex;
    align-items: center;
    justify-content: space-between;
    padding: 0 23px 4px 15px;
    background-color: #e8e800;
    border-left: 1px solid #33330a;
}

.logo {
    display: flex;
    font-family: "Liberation Sans", sans-serif;
    font-stretch: normal;
    font-size: 68px;
    line-height: 68px;
    color: #808080;
}

.logo-a {
    transform: translateY(4px);
}

.logo-b {
    margin-left: -10px;
    transform: translateY(-3px);
}

.brand {
    font-size: 40px;
    font-stretch: normal;
    font-weight: bold;
    color: #1a1a18;
    white-space: nowrap;
    text-shadow: 3px 0 3px rgba(40, 40, 0, 0.25);
}

/* scrollbars */
.vscroll {
    width: 20px;
    flex: none;
    display: flex;
    flex-direction: column;
    background-color: #e8e8e0;
}

.sb-btn {
    height: 15px;
    flex: none;
    margin-right: 2px;
    display: flex;
    align-items: center;
    justify-content: center;
    background-color: #d8d7c9;
    border-bottom: 1px solid #b5b4a7;
}

.sb-track {
    height: 742px;
    flex: none;
    padding-top: 210px;
}

.sb-thumb {
    height: 184px;
    margin-right: 2px;
    background-color: #d8d7c9;
    border-bottom: 1px solid #b5b4a7;
}

.sb-page {
    height: 15px;
    flex: none;
    margin-right: 2px;
    display: flex;
    flex-direction: column;
    align-items: center;
    justify-content: center;
    gap: 1px;
    background-color: #d8d7c9;
}

.tri-up,
.tri-down {
    display: block;
    width: 0;
    height: 0;
    border-left: 4px solid transparent;
    border-right: 4px solid transparent;
}

.tri-up {
    border-bottom: 4px solid #222;
}

.tri-down {
    border-top: 4px solid #222;
}

.dim .tri-up {
    border-bottom-color: #b0afa4;
}

.dim .tri-down {
    border-top-color: #b0afa4;
}

/* notes */
.notes {
    position: relative;
    height: 48px;
    margin-top: 7px;
    display: flex;
    justify-content: space-between;
    background-color: #e9ebeb;
    border-top: 1px solid #a9a89b;
    border-left: 1px solid #b5b4a7;
}

.notes-text {
    padding: 2px 0 0 2px;
    font-size: 12.5px;
    letter-spacing: 0.55px;
    color: #55554f;
    text-shadow: 6px 0 3px rgba(90, 90, 80, 0.15);
}

.notes-scroll {
    width: 20px;
    display: flex;
    flex-direction: column;
    justify-content: space-between;
    background-color: #e8e8e0;
}

.ibeam {
    position: absolute;
    left: 839px;
    top: 23px;
    width: 7px;
    height: 17px;
    border-top: 1px solid #222;
    border-bottom: 1px solid #222;
    background: linear-gradient(#222, #222) center / 1px 100% no-repeat;
}

/* layouts task pane */
.layout-pane {
    width: 140px;
    flex: none;
    display: flex;
    flex-direction: column;
    background-color: #ecedec;
}

.layout-pane b,
.apply,
.lay-head {
    font-family: "DejaVu Sans", sans-serif;
    font-weight: bold;
}

.task-head {
    height: 18px;
    flex: none;
    display: flex;
    align-items: center;
    padding-left: 7px;
    background-color: #dcdbce;
    color: #333;
}

.task-head b {
    margin-left: 5px;
    white-space: nowrap;
}

.nav-arrow {
    width: 0;
    height: 0;
    margin-right: 7px;
    border-top: 6px solid transparent;
    border-bottom: 6px solid transparent;
}

.nav-arrow.left {
    margin-right: 12px;
    border-right: 6px solid #aaa99f;
}

.nav-arrow.right {
    border-left: 6px solid #aaa99f;
}

.apply {
    height: 22px;
    flex: none;
    padding-left: 7px;
    line-height: 27px;
    color: #333;
    white-space: nowrap;
    overflow: hidden;
}

.layouts {
    height: 828px;
    flex: none;
    margin-left: 8px;
    padding-top: 2px;
    overflow: hidden;
    border-left: 1px solid #555;
    border-top: 1px solid #555;
    background-color: #ecedee;
    background-image: linear-gradient(#a8a8a0, #a8a8a0);
    background-size: 1px 100%;
    background-position: 92px 0;
    background-repeat: no-repeat;
}

.lay-head {
    height: 22px;
    padding-left: 5px;
    background-color: #d8d7c9;
    line-height: 22px;
    letter-spacing: 0.2px;
    color: #333;
    white-space: nowrap;
    overflow: hidden;
}

.lay-grid {
    display: grid;
    grid-template-columns: 80px 80px;
    column-gap: 14px;
    row-gap: 12.2px;
    padding: 6px 0 6px 5px;
    width: 190px;
}

.lay {
    display: block;
    width: 80px;
    height: 54px;
}

.lay.selected {
    outline: 2px solid #3a66ad;
    outline-offset: 2px;
}

.show-row {
    height: 22px;
    flex: none;
    display: flex;
    align-items: center;
    gap: 6px;
    padding-left: 9px;
    white-space: nowrap;
    overflow: hidden;
    color: #55554f;
    letter-spacing: 0.2px;
}

.check {
    width: 12px;
    height: 12px;
    flex: none;
    font-size: 10px;
    line-height: 12px;
    text-align: center;
    color: #111;
    background-color: #cfcfc6;
}

/* status bar */
.status {
    height: 18px;
    flex: none;
    display: flex;
    align-items: center;
    color: #3a3a36;
    text-shadow: 5px 0 3px rgba(90, 90, 80, 0.12);
}

.st-slide {
    width: 279px;
    padding-left: 7px;
}

.st-name {
    width: 239px;
    letter-spacing: 0.3px;
}

.st-lang {
    width: 147px;
    letter-spacing: 0.4px;
}

.st-icon {
    width: 24px;
    height: 16px;
}

.black-bottom {
    height: 4px;
    flex: none;
    background-color: #000;
}

.black-right {
    position: absolute;
    top: 0;
    right: 0;
    width: 12px;
    height: 100%;
    background-color: #0a0a0a;
}
```
